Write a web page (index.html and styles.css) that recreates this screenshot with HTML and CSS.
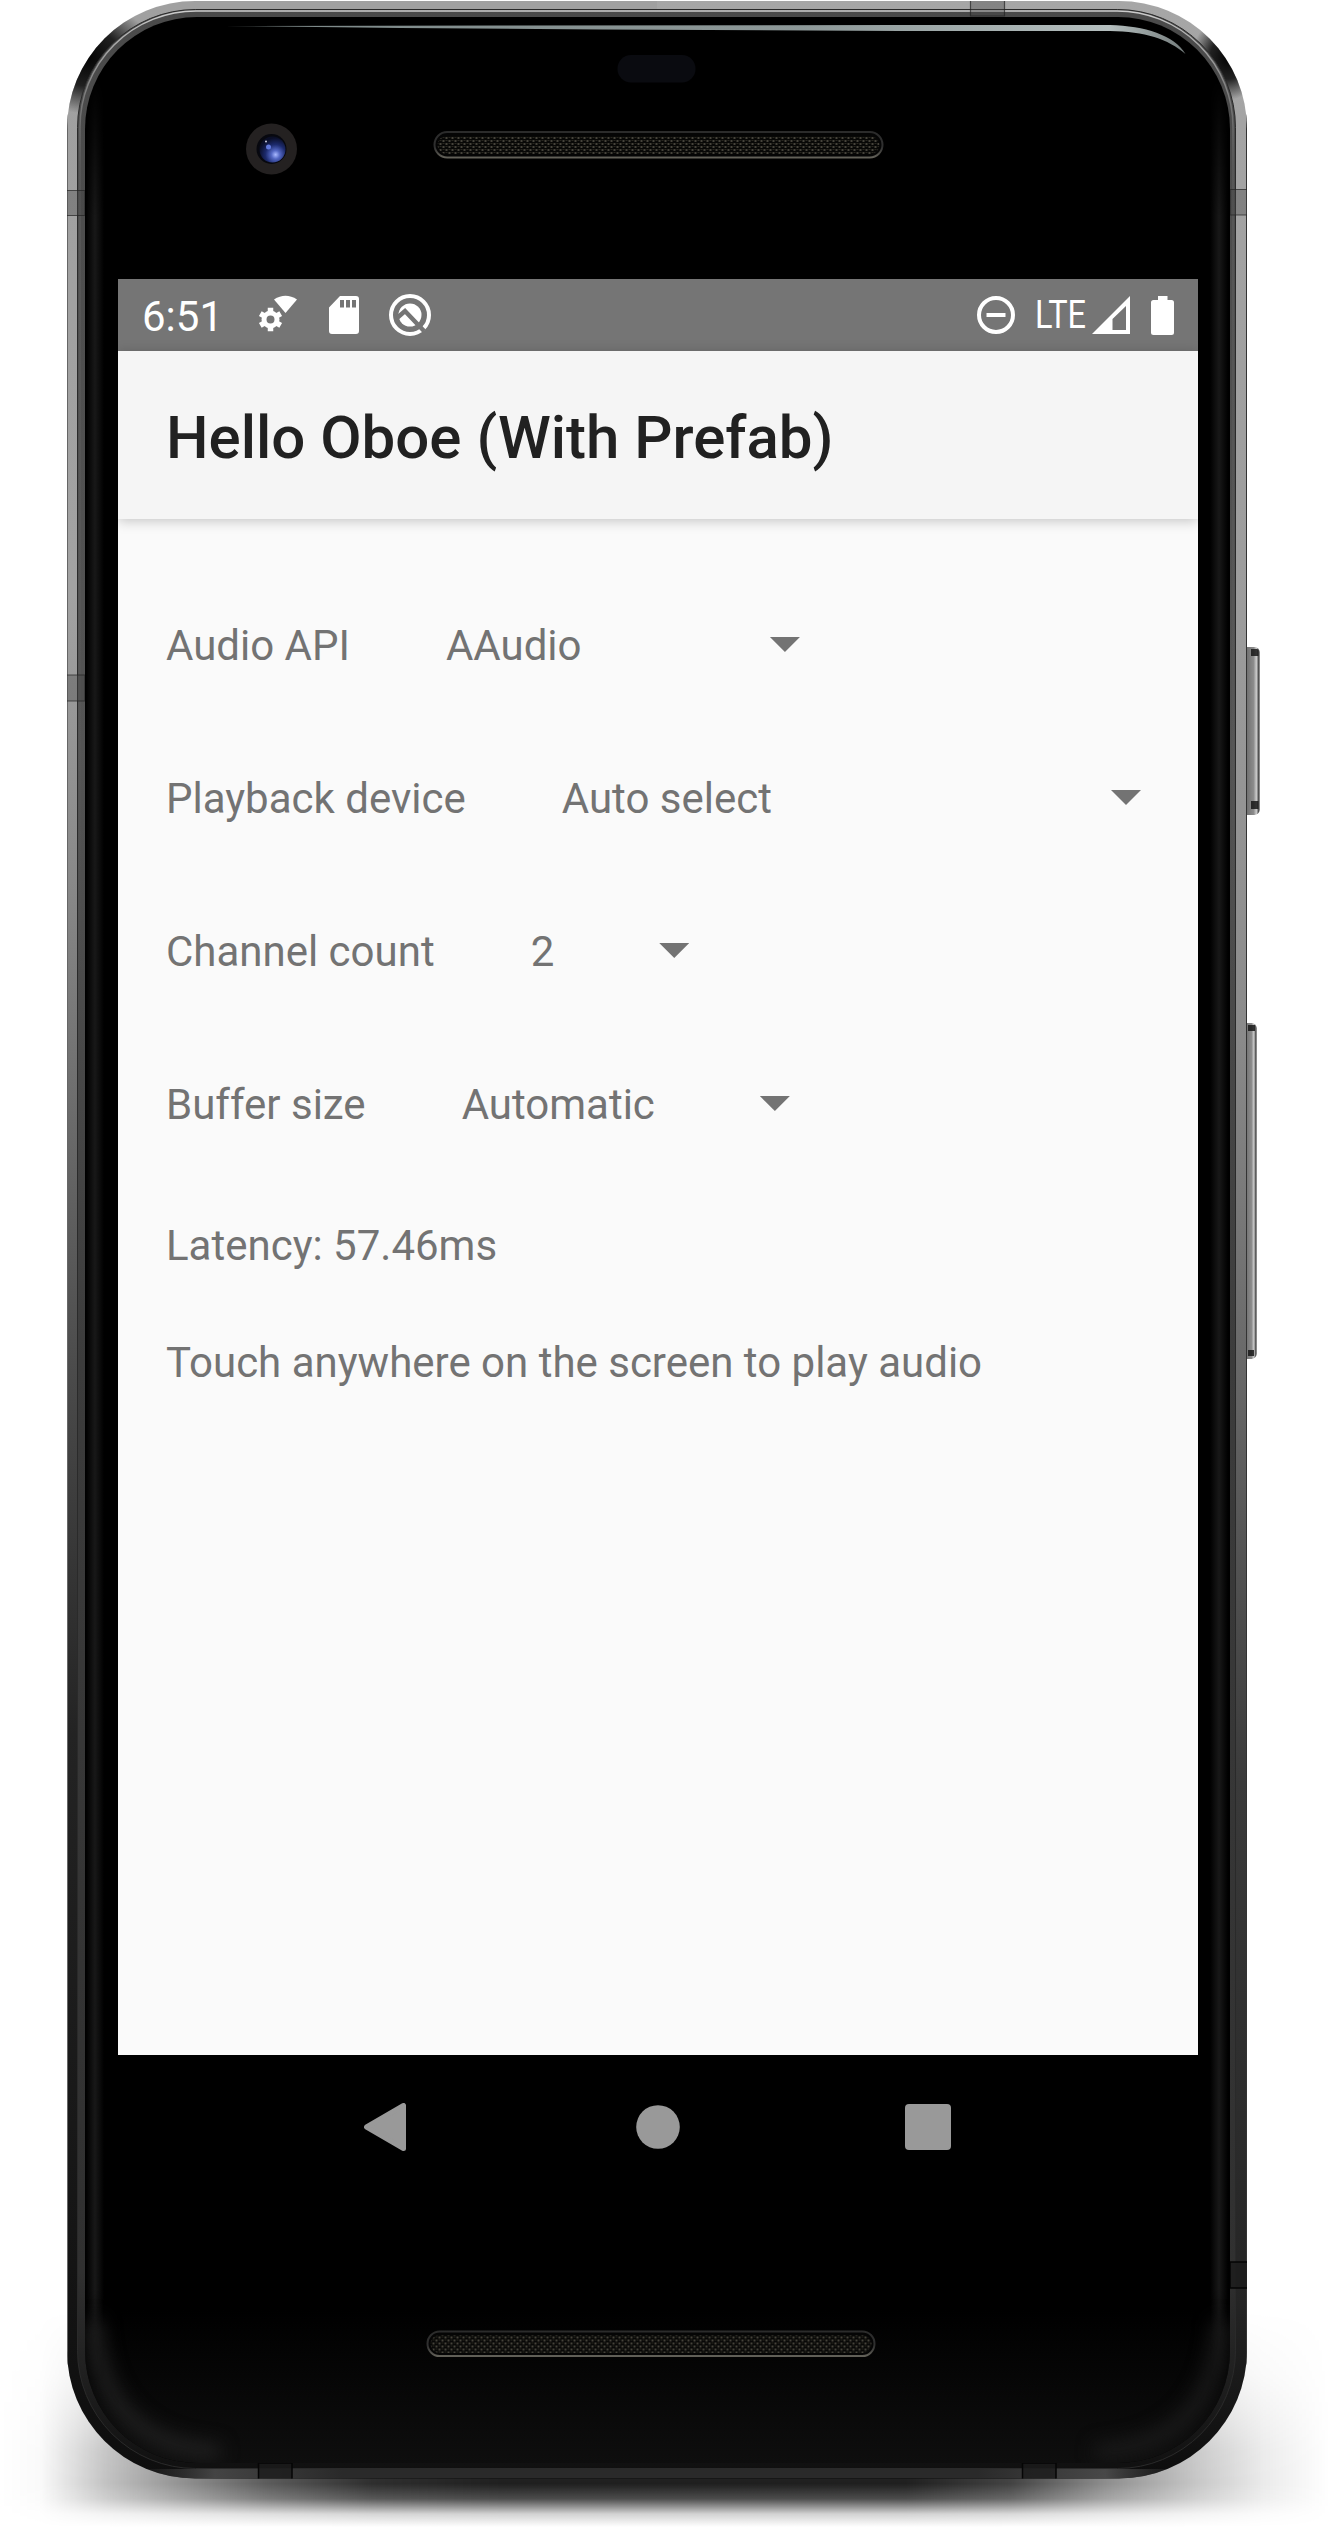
FILE: index.html
```html
<!DOCTYPE html>
<html lang="en">
<head>
<meta charset="utf-8">
<title>Hello Oboe (With Prefab)</title>
<link rel="stylesheet" href="styles.css">
</head>
<body>
<main class="stage">
  <svg class="device" viewBox="0 0 1330 2532" aria-hidden="true">
    <defs>
      <linearGradient id="shadowX">
        <stop offset="0" stop-color="#000" stop-opacity="0"/>
        <stop offset=".03" stop-opacity=".02"/>
        <stop offset=".08" stop-opacity=".24"/>
        <stop offset=".14" stop-opacity=".44"/>
        <stop offset=".2" stop-opacity=".64"/>
        <stop offset=".28" stop-opacity=".82"/>
        <stop offset=".38" stop-opacity=".88"/>
        <stop offset=".68" stop-opacity=".88"/>
        <stop offset=".76" stop-opacity=".74"/>
        <stop offset=".83" stop-opacity=".45"/>
        <stop offset=".9" stop-opacity=".22"/>
        <stop offset=".95" stop-opacity=".08"/>
        <stop offset="1" stop-opacity="0"/>
      </linearGradient>
      <linearGradient id="shadowY" x2="0" y2="1">
        <stop offset="0" stop-color="#000"/>
        <stop offset=".3" stop-color="#444"/>
        <stop offset=".65" stop-color="#eee"/>
        <stop offset=".8" stop-color="#fff"/>
        <stop offset=".87" stop-color="#ccc"/>
        <stop offset=".94" stop-color="#333"/>
        <stop offset="1" stop-color="#000"/>
      </linearGradient>
      <mask id="shadowMask" maskUnits="userSpaceOnUse" x="0" y="2310" width="1330" height="222">
        <rect x="0" y="2310" width="1330" height="217" fill="url(#shadowY)"/>
      </mask>
      <linearGradient id="metalLeft" gradientUnits="userSpaceOnUse" x1="0" y1="0" x2="0" y2="2478">
        <stop offset="0" stop-color="#a0a0a0"/>
        <stop offset=".24" stop-color="#a2a2a2"/>
        <stop offset=".36" stop-color="#888"/>
        <stop offset=".55" stop-color="#4c4c4c"/>
        <stop offset=".7" stop-color="#232323"/>
        <stop offset="1" stop-color="#0e0e0e"/>
      </linearGradient>
      <linearGradient id="metalRight" gradientUnits="userSpaceOnUse" x1="0" y1="0" x2="0" y2="2478">
        <stop offset="0" stop-color="#a6a6a6"/>
        <stop offset=".25" stop-color="#9c9c9c"/>
        <stop offset=".42" stop-color="#8a8a8a"/>
        <stop offset=".56" stop-color="#666"/>
        <stop offset=".72" stop-color="#3a3a3a"/>
        <stop offset=".93" stop-color="#242424"/>
        <stop offset="1" stop-color="#0c0c0c"/>
      </linearGradient>
      <linearGradient id="rim" gradientUnits="userSpaceOnUse" x1="0" y1="8" x2="0" y2="2470">
        <stop offset="0" stop-color="#4a4a4a"/>
        <stop offset=".3" stop-color="#545454"/>
        <stop offset=".55" stop-color="#3c3c3c"/>
        <stop offset=".92" stop-color="#303030"/>
        <stop offset="1" stop-color="#101010"/>
      </linearGradient>
      <linearGradient id="rimLight" gradientUnits="userSpaceOnUse" x1="0" y1="8" x2="0" y2="1000">
        <stop offset="0" stop-color="#d0d0d0"/>
        <stop offset=".08" stop-color="#999" stop-opacity=".7"/>
        <stop offset=".16" stop-color="#777" stop-opacity=".3"/>
        <stop offset="1" stop-color="#777" stop-opacity="0"/>
      </linearGradient>
      <linearGradient id="bottomEdge" gradientUnits="userSpaceOnUse" x1="130" y1="0" x2="1190" y2="0">
        <stop offset="0" stop-color="#333" stop-opacity="0"/>
        <stop offset=".08" stop-color="#444"/>
        <stop offset=".2" stop-color="#2a2a2a"/>
        <stop offset=".8" stop-color="#2a2a2a"/>
        <stop offset=".92" stop-color="#484848"/>
        <stop offset="1" stop-color="#333" stop-opacity="0"/>
      </linearGradient>
      <radialGradient id="cornerDark">
        <stop offset="0" stop-color="#000" stop-opacity=".98"/>
        <stop offset=".5" stop-color="#000" stop-opacity=".8"/>
        <stop offset="1" stop-color="#000" stop-opacity="0"/>
      </radialGradient>
      <linearGradient id="sheen">
        <stop offset="0" stop-color="#181818" stop-opacity="0"/>
        <stop offset=".5" stop-color="#181818"/>
        <stop offset="1" stop-color="#181818" stop-opacity="0"/>
      </linearGradient>
      <linearGradient id="sheenFade" x2="0" y2="1">
        <stop offset="0" stop-color="#000"/>
        <stop offset=".06" stop-color="#fff"/>
        <stop offset=".96" stop-color="#fff"/>
        <stop offset="1" stop-color="#000"/>
      </linearGradient>
      <mask id="sheenMask" maskUnits="userSpaceOnUse" x="80" y="80" width="1170" height="2300">
        <rect x="80" y="80" width="1170" height="2300" fill="url(#sheenFade)"/>
      </mask>
      <linearGradient id="chinGlow" x2="0" y2="1">
        <stop offset="0" stop-color="#0e0e0e" stop-opacity="0"/>
        <stop offset="1" stop-color="#0e0e0e"/>
      </linearGradient>
      <linearGradient id="glint" gradientUnits="userSpaceOnUse" x1="225" y1="0" x2="1186" y2="0">
        <stop offset="0" stop-color="#7c8888"/>
        <stop offset=".6" stop-color="#8d9898"/>
        <stop offset=".92" stop-color="#b4bebe"/>
        <stop offset="1" stop-color="#747c7c"/>
      </linearGradient>
      <linearGradient id="slotEdge" x2="0" y2="1">
        <stop offset="0" stop-color="#2b2b2b"/>
        <stop offset=".6" stop-color="#303030"/>
        <stop offset="1" stop-color="#626058"/>
      </linearGradient>
      <pattern id="mesh" width="6" height="6" patternUnits="userSpaceOnUse">
        <rect width="6" height="6" fill="#080807"/>
        <rect x="0" y="0" width="2" height="2" fill="#46433b"/>
        <rect x="3" y="3" width="2" height="2" fill="#46433b"/>
        <rect x="3" y="0" width="2" height="1" fill="#28261f"/>
        <rect x="0" y="3" width="2" height="1" fill="#28261f"/>
      </pattern>
      <radialGradient id="lens" cx=".62" cy=".7" r=".65">
        <stop offset="0" stop-color="#a9b9ff"/>
        <stop offset=".25" stop-color="#5468c4"/>
        <stop offset=".6" stop-color="#1c2a6c"/>
        <stop offset="1" stop-color="#0a0e26"/>
      </radialGradient>
      <linearGradient id="key">
        <stop offset="0" stop-color="#5c5c5c"/>
        <stop offset=".4" stop-color="#747474"/>
        <stop offset=".7" stop-color="#8c8c8c"/>
        <stop offset=".84" stop-color="#ccc"/>
        <stop offset=".92" stop-color="#777"/>
        <stop offset="1" stop-color="#111"/>
      </linearGradient>
      <clipPath id="body"><rect x="67" y="1" width="1180" height="2477.500" rx="128"/></clipPath>
      <clipPath id="glass"><rect x="85" y="17" width="1145" height="2446" rx="112"/></clipPath>
    </defs>

    <rect y="2310" width="1330" height="222" fill="url(#shadowX)" mask="url(#shadowMask)"/>

    <!-- side keys -->
    <rect x="1240" y="647" width="19.500" height="168" rx="5" fill="url(#key)"/>
    <path d="M1251 649h6q1.500 0 1.500 2v5h-7.500zM1251 801h7.500v8h-7.500z" fill="#181818" opacity=".85"/>
    <rect x="1240" y="1023" width="16.500" height="336" rx="5" fill="url(#key)"/>
    <path d="M1248 1025h7v6h-7zM1248 1350h6v6h-6z" fill="#181818" opacity=".85"/>

    <!-- metal band -->
    <g clip-path="url(#body)">
      <rect x="67" y="1" width="590" height="2478" fill="url(#metalLeft)"/>
      <rect x="657" y="1" width="590" height="2478" fill="url(#metalRight)"/>
      <ellipse cx="88" cy="58" rx="66" ry="56" fill="url(#cornerDark)"/>
      <ellipse cx="1228" cy="58" rx="36" ry="42" fill="url(#cornerDark)"/>
      <rect x="130" y="2469" width="1060" height="9" fill="url(#bottomEdge)"/>
      <path d="M1246.500 110V2370" stroke="#333" stroke-width="1"/>
      <path d="M67.500 110V2370" stroke="#666" stroke-width="1"/>
    </g>
    <rect x="77.500" y="9.500" width="1158" height="2459" rx="118" fill="url(#rim)" stroke="#2a2a2a" stroke-width="1"/>
    <rect x="80" y="11" width="1153" height="2455" rx="116" fill="none" stroke="url(#rimLight)" stroke-width="1.500"/>

    <!-- antenna seams -->
    <g clip-path="url(#body)">
      <path d="M60 190.500H85V215.500H60zM60 675H85V701H60zM1230 189.500H1255V215H1230zM970.500-5V16H1004.500V-5z" fill="#444" fill-opacity=".35" stroke="#222" stroke-opacity=".7" stroke-width="1.200"/>
      <path d="M1230 2262H1255V2288H1230zM258.500 2463V2485H292V2463zM1022.500 2463V2485H1056V2463z" fill="#1c1c1c" fill-opacity=".8" stroke="#050505" stroke-width="1.500"/>
    </g>

    <!-- front glass -->
    <g clip-path="url(#glass)">
      <rect x="84" y="16" width="1148" height="2448"/>
      <rect x="84" y="2310" width="1148" height="154" fill="url(#chinGlow)"/>
      <g mask="url(#sheenMask)">
        <rect x="86" y="80" width="18" height="2300" fill="url(#sheen)"/>
        <rect x="1210" y="80" width="18" height="2300" fill="url(#sheen)"/>
      </g>
      <path d="M94 2320C97 2400 135 2448 220 2452" fill="none" stroke="#202020" stroke-width="16" class="soft"/>
      <path d="M1221 2320C1218 2400 1180 2448 1095 2452" fill="none" stroke="#1a1a1a" stroke-width="16" class="soft"/>
    </g>
    <path d="M225 26L500 25.500L900 25H1110C1145 26 1174 35 1185.500 54C1168 39 1145 31.500 1110 31H900L600 29.500L400 28z" fill="url(#glint)"/>

    <!-- camera, sensor and speakers -->
    <circle cx="271.500" cy="149" r="25.500" fill="#242121"/>
    <circle cx="271.500" cy="149" r="15" fill="#07080f"/>
    <circle cx="272.500" cy="149.500" r="13" fill="url(#lens)"/>
    <circle cx="268.500" cy="147" r="2.500" fill="#6279dc"/>
    <circle cx="266" cy="141.500" r="1" fill="#ccd"/>
    <rect x="617.500" y="55" width="78" height="27.500" rx="13.500" fill="#0a0b10"/>
    <g transform="translate(433.500 131)">
      <rect x="1" y="1" width="448" height="25.500" rx="12.700" fill="#050505" stroke="url(#slotEdge)" stroke-width="2"/>
      <rect x="4" y="5" width="442" height="18" rx="9" fill="url(#mesh)"/>
    </g>
    <g transform="translate(426.500 2330.500)">
      <rect x="1" y="1" width="447" height="24.500" rx="12.200" fill="#050505" stroke="url(#slotEdge)" stroke-width="2"/>
      <rect x="4" y="4.500" width="441" height="18" rx="9" fill="url(#mesh)"/>
    </g>
  </svg>

  <section class="screen">
    <header class="status">
      <span class="clock">6:51</span>
      <svg class="ico-wifi" viewBox="0 0 40 40" width="40" height="40">
        <path d="M16 4.500Q27.500-3 39 4.500L27.500 18z" fill="#fff"/>
        <g fill="none" stroke="#fff">
          <circle cx="12.500" cy="24.500" r="6.500" stroke-width="5"/>
          <path d="M12.500 12.700v4M12.500 32.300v4M2.300 18.600l3.500 2M19.200 28.400l3.500 2M2.300 30.400l3.500-2M19.200 20.600l3.500-2" stroke-width="5.500"/>
        </g>
      </svg>
      <svg class="ico-sd" viewBox="0 0 30 38" width="30" height="38">
        <path fill="#fff" fill-rule="evenodd" d="M11 0H27Q30 0 30 3V35Q30 38 27 38H3Q0 38 0 35V11.500zM11 4V11.500H15V4zM17 4V11.500H21V4zM23 4V11.500H27V4z"/>
      </svg>
      <svg class="ico-debug" viewBox="0 0 42 42" width="42" height="42">
        <circle cx="21" cy="21" r="19" fill="none" stroke="#fff" stroke-width="4"/>
        <circle cx="21" cy="21" r="11.500" fill="#fff"/>
        <path d="M8 24L16 17L35 37" fill="none" stroke="#757575" stroke-width="4.500"/>
      </svg>
      <svg class="ico-dnd" viewBox="0 0 38 38" width="38" height="38">
        <circle cx="19" cy="19" r="17" fill="none" stroke="#fff" stroke-width="4"/>
        <path d="M9.500 19H28.500" stroke="#fff" stroke-width="4"/>
      </svg>
      <svg class="ico-lte" viewBox="0 0 54 48" width="54" height="48">
        <text x="2" y="37" textLength="51" lengthAdjust="spacingAndGlyphs">LTE</text>
      </svg>
      <svg class="ico-signal" viewBox="0 0 38 38" width="38" height="38">
        <path fill="#fff" fill-rule="evenodd" d="M0 38L38 0V38zM20.500 34H34V10L20.500 23z"/>
      </svg>
      <svg class="ico-battery" viewBox="0 0 23 39" width="23" height="39">
        <path fill="#fff" d="M7 0H16.500V4H20.500Q23 4 23 6.500V36.500Q23 39 20.500 39H2.500Q0 39 0 36.500V6.500Q0 4 2.500 4H7z"/>
      </svg>
    </header>
    <h1 class="appbar">Hello Oboe (With Prefab)</h1>
    <div class="content">
      <div class="row"><span>Audio API</span><div class="select select-api"><span>AAudio</span><i class="caret"></i></div></div>
      <div class="row"><span>Playback device</span><div class="select select-device"><span>Auto select</span><i class="caret"></i></div></div>
      <div class="row"><span>Channel count</span><div class="select"><span>2</span><i class="caret"></i></div></div>
      <div class="row"><span>Buffer size</span><div class="select"><span>Automatic</span><i class="caret"></i></div></div>
      <p class="note">Latency: 57.46ms</p>
      <p class="note">Touch anywhere on the screen to play audio</p>
    </div>
  </section>
  <nav class="nav">
    <svg viewBox="0 0 48 48" width="48" height="48"><path d="M2.500 24L39.500 2.500V45.500z" fill="#999" stroke="#999" stroke-width="5" stroke-linejoin="round"/></svg>
    <svg viewBox="0 0 48 48" width="48" height="48"><circle cx="24" cy="24" r="21.800" fill="#999"/></svg>
    <svg viewBox="0 0 48 48" width="48" height="48"><rect x="1" y="1" width="46" height="46" rx="4" fill="#999"/></svg>
  </nav>
</main>
</body>
</html>
```
FILE: styles.css
```css
* { box-sizing: border-box; }

body {
  margin: 0;
  background: #fff;
  font-family: Roboto, "Liberation Sans", sans-serif;
}

.stage {
  position: relative;
  width: 1330px;
  height: 2532px;
  padding: 279px 132px 0 118px;
  overflow: hidden;
}

/* the phone body lies behind the screen */
.device {
  position: absolute;
  inset: 0;
  width: 1330px;
  height: 2532px;
}

.soft { filter: blur(9px); }

.screen {
  position: relative;
  height: 1776px;
  background: #fafafa;
  overflow: hidden;
}

.status {
  display: flex;
  align-items: center;
  height: 72px;
  padding: 0 24px;
  background: #757575;
}

.status svg {
  display: block;
  flex: none;
  overflow: visible;
}

.clock {
  width: 116px;
  padding-top: 3px;
  color: #fff;
  font-size: 42px;
  line-height: 48px;
}

.ico-sd { margin-left: 31px; }
.ico-debug { margin-left: 30px; }
.ico-dnd { margin-left: auto; }
.ico-lte { margin-left: 18px; }
.ico-lte text { fill: #fff; font-size: 38px; }
.ico-signal { margin-left: 5px; }
.ico-battery { margin-left: 21px; }

.appbar {
  display: flex;
  align-items: center;
  height: 168px;
  margin: 0;
  padding: 5px 48px 0;
  background: #f5f5f5;
  box-shadow: 0 2px 12px rgba(0, 0, 0, .22);
  color: #212121;
  font-size: 60px;
  font-weight: 500;
  line-height: 70px;
}

.content {
  padding: 50px 57px 0 48px;
  color: #737373;
  font-size: 42px;
}

.row {
  display: flex;
  align-items: center;
  gap: 96px;
  height: 153px;
  line-height: 49px;
}

.select {
  display: flex;
  align-items: center;
  justify-content: space-between;
  gap: 105px;
}

.select-api { width: 354px; }
.select-device { flex: 1; }

.caret {
  width: 30px;
  height: 15px;
  margin-bottom: 2px;
  background: #737373;
  clip-path: polygon(0 0, 100% 0, 50% 100%);
}

.note {
  margin: 0 0 68px;
  line-height: 49px;
}

.row + .note { margin-top: 40px; }

.nav {
  position: relative;
  display: flex;
  justify-content: space-between;
  align-items: center;
  height: 144px;
  padding: 0 246px;
}
```
